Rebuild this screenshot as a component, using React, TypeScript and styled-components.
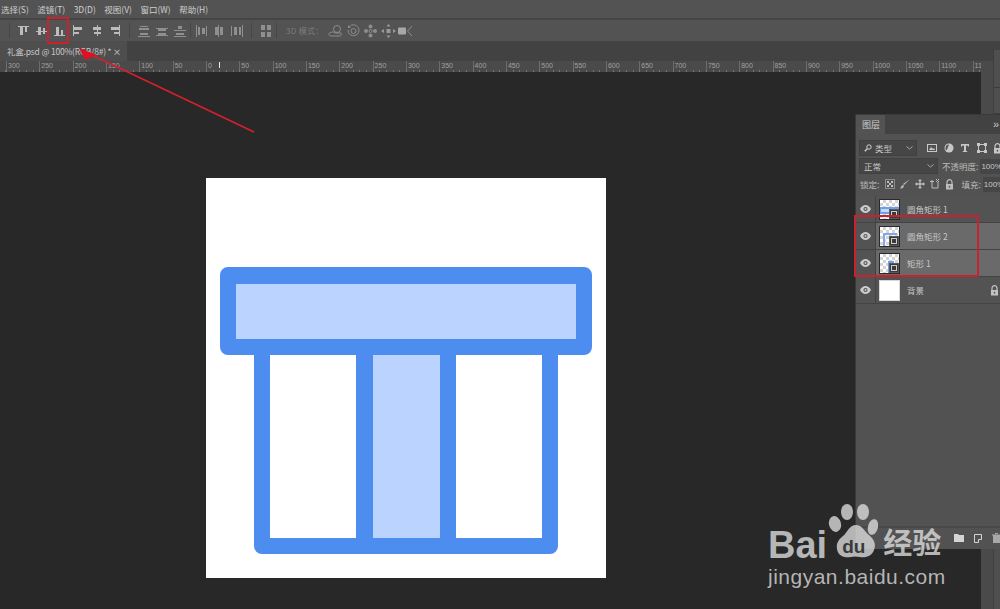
import React from "react";
import styled, { createGlobalStyle } from "styled-components";

const cjk = `"Noto Sans CJK SC", "Liberation Sans", sans-serif`;

const GlobalStyle = createGlobalStyle`
  html, body { margin: 0; padding: 0; background: #282828; }
  body { font-family: ${cjk}; }
  * { box-sizing: border-box; }
`;

const Page = styled.div`
  position: relative;
  width: 1000px;
  height: 609px;
  overflow: hidden;
  display: flex;
  flex-direction: column;
  background: #282828;
`;

const MenuBar = styled.div`
  height: 18px;
  background: #535353;
  display: flex;
  align-items: center;
  padding-left: 1px;
  gap: 8.5px;
`;

const MenuItem = styled.span`
  font-size: 8.5px;
  line-height: 18px;
  color: #cfcfcf;
  white-space: nowrap;
`;

const Toolbar = styled.div`
  height: 23px;
  background: #535353;
  border-top: 2px solid #454545;
  display: flex;
  align-items: center;
  padding-left: 9px;
`;

const ToolSeparator = styled.div<{ $left: number; $right: number }>`
  width: 1px;
  height: 15px;
  background: #464646;
  margin: 0 ${(p) => p.$right}px 0 ${(p) => p.$left}px;
`;

const ToolGroup = styled.div<{ $gap: number }>`
  display: flex;
  align-items: center;
  gap: ${(p) => p.$gap}px;
`;

const ModeLabel = styled.span`
  font-size: 8px;
  color: #7d7d7d;
  width: 42px;
  white-space: nowrap;
  letter-spacing: 0.3px;
`;

const Main = styled.div`
  flex: 1;
  display: flex;
  min-height: 0;
`;

const DocumentArea = styled.div`
  flex: 1;
  display: flex;
  flex-direction: column;
  min-width: 0;
`;

const TabBar = styled.div`
  height: 20px;
  background: #424242;
  display: flex;
`;

const DocTab = styled.div`
  width: 127px;
  background: #4e4e4e;
  display: flex;
  align-items: center;
  justify-content: space-between;
  padding: 0 6px 0 7px;
  font-size: 8.5px;
  letter-spacing: -0.2px;
  color: #c8c8c8;
  white-space: nowrap;
`;

const Ruler = styled.div`
  position: relative;
  height: 11px;
  background: #4a4a4a;
  display: flex;
  overflow: hidden;
  padding-left: 6px;
`;

const RulerTicks = styled.div`
  position: absolute;
  left: 0;
  right: 0;
  bottom: 0;
  height: 2px;
  background: repeating-linear-gradient(
    90deg,
    #747474 0,
    #747474 1px,
    transparent 1px,
    transparent 6.667px
  );
  background-position: 6px 0;
`;

const RulerCell = styled.div`
  flex: 0 0 33.333px;
  border-left: 1px solid #6c6c6c;
  padding-left: 1px;
  font-family: "Liberation Sans", sans-serif;
  font-size: 7px;
  line-height: 10px;
  color: #a0a0a0;
`;

const RulerMark = styled.div`
  position: absolute;
  left: 219px;
  top: 1px;
  width: 1px;
  height: 6px;
  background: #e8e8e8;
`;

const Canvas = styled.div`
  flex: 1;
  background: #282828;
  padding: 106px 0 0 206px;
  overflow: hidden;
`;

const Artboard = styled.div`
  width: 400px;
  height: 400px;
  background: #fff;
  padding: 89px 0 0 14px;
`;

const Lid = styled.div`
  width: 372px;
  height: 88px;
  border: 16px solid #4e8df0;
  border-top-width: 17px;
  border-radius: 8px;
  background: #bbd3ff;
  background-clip: padding-box;
`;

const Box = styled.div`
  width: 304px;
  height: 199px;
  margin-left: 34px;
  background: #4e8df0;
  border-radius: 0 0 8px 8px;
  padding: 0 16px 16px;
  display: flex;
  justify-content: space-between;
`;

const Slot = styled.div<{ $width: number; $fill: string }>`
  width: ${(p) => p.$width}px;
  height: 100%;
  background: ${(p) => p.$fill};
`;

const Dock = styled.div`
  width: 19px;
  display: flex;
  flex-direction: column;
  background: linear-gradient(#424242 20px, #4a4a4a 20px);
  padding-top: 9px;
`;

const DockRail = styled.div`
  flex: 1;
  margin-left: 12px;
  border-left: 1px solid #3e3e3e;
  background: #4f4f4f;
  display: flex;
  flex-direction: column;
  gap: 2px;
`;

const DockCell = styled.div<{ $height: number }>`
  height: ${(p) => p.$height}px;
  border-bottom: 1px solid #3e3e3e;
`;

/* layers panel floats over the canvas */
const LayersPanel = styled.div`
  position: absolute;
  left: 855px;
  top: 114px;
  width: 145px;
  height: 435px;
  background: #525252;
  border-left: 1px solid #3a3a3a;
  border-top: 1px solid #3a3a3a;
  display: flex;
  flex-direction: column;
  overflow: hidden;
`;

const PanelHeader = styled.div`
  height: 19px;
  flex: none;
  background: #424242;
  display: flex;
  justify-content: space-between;
  align-items: center;
  padding-right: 1px;
`;

const PanelTab = styled.div`
  width: 29px;
  height: 100%;
  background: #535353;
  font-size: 9px;
  line-height: 19px;
  color: #cdcdcd;
  padding-left: 6px;
`;

const Collapse = styled.span`
  font-family: "Liberation Sans", sans-serif;
  font-size: 11px;
  color: #c8c8c8;
  line-height: 19px;
`;

const OptionRow = styled.div`
  height: 18px;
  flex: none;
  display: flex;
  align-items: center;
  padding-left: 3px;
  font-size: 8.5px;
  color: #bdbdbd;
  white-space: nowrap;
`;

const FilterRow = styled(OptionRow)`
  margin-top: 5px;
`;

const Select = styled.div<{ $width: number }>`
  flex: none;
  width: ${(p) => p.$width}px;
  height: 16px;
  background: #464646;
  border: 1px solid #414141;
  display: flex;
  align-items: center;
  justify-content: space-between;
  padding: 0 3px 0 4px;
  color: #c8c8c8;
`;

const SelectLabel = styled.span`
  display: flex;
  align-items: center;
  gap: 3px;
`;

const OptionIcons = styled.div<{ $gap: number; $left: number }>`
  display: flex;
  align-items: center;
  gap: ${(p) => p.$gap}px;
  margin-left: ${(p) => p.$left}px;
  flex: none;
`;

const OptionLabel = styled.span<{ $left: number }>`
  margin-left: ${(p) => p.$left}px;
  flex: none;
`;

const ValueBox = styled.div`
  flex: none;
  width: 28px;
  height: 15px;
  margin-left: 2px;
  background: #464646;
  padding-left: 1px;
  font-family: "Liberation Sans", sans-serif;
  font-size: 8px;
  line-height: 15px;
  color: #c8c8c8;
`;

const LayerList = styled.div`
  margin-top: 3px;
  flex: 1;
  display: flex;
  flex-direction: column;
`;

const LayerRow = styled.div<{ $selected?: boolean }>`
  height: 27px;
  flex: none;
  display: flex;
  align-items: center;
  background: ${(p) => (p.$selected ? "#6a6a6a" : "#535353")};
  border-bottom: 1px solid #434343;
`;

const EyeCell = styled.div`
  width: 20px;
  height: 100%;
  flex: none;
  display: flex;
  align-items: center;
  justify-content: center;
  background: #535353;
  border-right: 1px solid #434343;
`;

const Thumb = styled.div<{ $plain?: boolean }>`
  position: relative;
  width: 21px;
  height: 21px;
  margin-left: 3px;
  flex: none;
  border: 1px solid ${(p) => (p.$plain ? "#d8d8d8" : "#2a2a2a")};
  overflow: hidden;
  background: ${(p) =>
    p.$plain
      ? "#fff"
      : "repeating-conic-gradient(#d4d4d4 0 25%, #fff 0 50%) 0 0 / 6px 6px"};
`;

const ThumbBadge = styled.div`
  position: absolute;
  right: 0;
  bottom: 0;
  width: 10px;
  height: 10px;
  background: #3a3a3a;
  border: 1px solid #5a5a5a;
  &::after {
    content: "";
    position: absolute;
    inset: 1px;
    border: 1px solid #cfcfcf;
  }
`;

const LayerName = styled.span`
  margin-left: 7px;
  font-size: 8.5px;
  color: #c6c6c6;
  white-space: nowrap;
  flex: 1;
`;

const LayerLock = styled.div`
  margin-right: 1px;
  display: flex;
`;

const PanelFooter = styled.div`
  height: 23px;
  flex: none;
  border-top: 2px solid #484848;
  display: flex;
  align-items: flex-start;
  justify-content: flex-end;
  gap: 9px;
  padding-top: 5px;
  margin-right: -1px;
`;

/* annotations drawn over the screenshot */
const Highlight = styled.div<{ $x: number; $y: number; $w: number; $h: number }>`
  position: absolute;
  left: ${(p) => p.$x}px;
  top: ${(p) => p.$y}px;
  width: ${(p) => p.$w}px;
  height: ${(p) => p.$h}px;
  border: 2px solid #c9222d;
`;

const ArrowLayer = styled.svg`
  position: absolute;
  left: 0;
  top: 0;
  pointer-events: none;
`;

const Watermark = styled.div`
  position: absolute;
  left: 766px;
  top: 503px;
  width: 190px;
  height: 90px;
  color: rgba(222, 222, 222, 0.78);
`;

const WatermarkRow = styled.div`
  display: flex;
  align-items: flex-end;
  height: 58px;
  padding-left: 2px;
`;

const BaiText = styled.span`
  font-family: "Liberation Sans", sans-serif;
  font-weight: 700;
  font-size: 38px;
  line-height: 32px;
`;

const PawWrap = styled.div`
  position: relative;
  width: 52px;
  height: 58px;
  margin-left: -1px;
  flex: none;
`;

const DuText = styled.span`
  position: absolute;
  left: 16px;
  top: 34px;
  font-family: "Liberation Sans", sans-serif;
  font-weight: 700;
  font-size: 19px;
  line-height: 19px;
  color: #3a3a3a;
`;

const JingyanText = styled.span`
  margin-left: 5px;
  font-size: 29px;
  font-weight: 700;
  line-height: 40px;
  white-space: nowrap;
`;

const SiteText = styled.div`
  font-family: "Liberation Sans", sans-serif;
  font-size: 21px;
  line-height: 26px;
  margin: 3px 0 0 2px;
  letter-spacing: 0.5px;
  white-space: nowrap;
`;

type Bar = [number, number, number, number];

function GlyphIcon({ bars, color = "#bcbcbc" }: { bars: Bar[]; color?: string }) {
  return (
    <svg width="14" height="14" viewBox="0 0 14 14">
      {bars.map((b, i) => (
        <rect key={i} x={b[0]} y={b[1]} width={b[2]} height={b[3]} fill={color} />
      ))}
    </svg>
  );
}

const groupA: Bar[][] = [
  [[1, 2, 11, 1], [3, 3, 3, 8], [8, 3, 2, 5]],
  [[1, 7, 11, 1], [3, 3, 3, 8], [8, 4, 2, 6]],
  [[1, 11, 11, 1], [3, 3, 3, 8], [8, 6, 2, 5]],
];
const groupB: Bar[][] = [
  [[2, 1, 1, 11], [3, 3, 8, 3], [3, 8, 5, 2]],
  [[7, 1, 1, 11], [3, 3, 8, 3], [4, 8, 7, 2]],
  [[11, 1, 1, 11], [3, 3, 8, 3], [6, 8, 5, 2]],
];
const groupC: Bar[][] = [
  [[3, 2, 8, 1], [2, 4, 10, 2], [3, 9, 8, 2], [1, 12, 12, 1]],
  [[1, 4, 12, 1], [3, 5, 8, 2], [3, 9, 8, 2], [1, 11, 12, 1]],
  [[5, 2, 4, 3], [1, 6, 12, 1], [3, 9, 8, 2], [1, 12, 12, 1]],
];
const groupD: Bar[][] = [
  [[2, 1, 1, 12], [4, 3, 2, 8], [8, 4, 3, 6], [12, 2, 1, 10]],
  [[6, 1, 1, 12], [3, 3, 3, 8], [8, 3, 3, 8]],
  [[1, 2, 1, 10], [4, 3, 3, 8], [9, 3, 2, 8], [12, 1, 1, 12]],
];
const autoAlign: Bar[] = [[2, 1, 4, 5], [8, 1, 4, 5], [2, 8, 4, 5], [8, 8, 4, 5]];

function ThreeDIcon({ kind }: { kind: number }) {
  const stroke = { fill: "none", stroke: "#8d8d8d", strokeWidth: 1 };
  return (
    <svg width="15" height="14" viewBox="0 0 15 14">
      {kind === 0 && (
        <>
          <circle cx="9" cy="5" r="3.5" {...stroke} />
          <path d="M1 9.5c2-2 5-2 6-.5h6c1 2 0 3-2 3H3C1.500 12 .5 11 1 9.500z" {...stroke} />
        </>
      )}
      {kind === 1 && (
        <>
          <path d="M3.500 2.500A5.500 5.500 0 1 1 2 6" {...stroke} />
          <circle cx="7.500" cy="7" r="2.500" {...stroke} />
          <path d="M2 1v3h3z" fill="#8d8d8d" />
        </>
      )}
      {kind === 2 && (
        <>
          <circle cx="7.500" cy="2.500" r="2" fill="#8d8d8d" />
          <circle cx="7.500" cy="11.500" r="2" fill="#8d8d8d" />
          <circle cx="3" cy="7" r="2" fill="#8d8d8d" />
          <circle cx="12" cy="7" r="2" fill="#8d8d8d" />
          <circle cx="7.500" cy="7" r="1.500" {...stroke} />
        </>
      )}
      {kind === 3 && (
        <>
          <rect x="5.500" y="5" width="4" height="4" fill="#9a9a9a" />
          <path d="M7.500 0l2 2.500h-4zM7.500 14l2-2.500h-4zM0 7l3-2v4zM15 7l-3-2v4z" fill="#9a9a9a" />
        </>
      )}
      {kind === 4 && (
        <>
          <rect x="0" y="3.500" width="8" height="7" rx="1" fill="#a8a8a8" />
          <path d="M14 2L9.500 7l4.500 5" {...stroke} />
        </>
      )}
    </svg>
  );
}

function EyeIcon() {
  return (
    <svg width="11" height="8" viewBox="0 0 11 8">
      <path d="M0 4c2.800-5.200 8.200-5.200 11 0-2.800 5.200-8.200 5.200-11 0z" fill="#cdcdcd" />
      <circle cx="5.500" cy="4" r="2.100" fill="#535353" />
      <circle cx="5.500" cy="4" r="1" fill="#cdcdcd" />
    </svg>
  );
}

function LockIcon({ color = "#c4c4c4" }: { color?: string }) {
  return (
    <svg width="9" height="11" viewBox="0 0 9 11">
      <path d="M2 5V3.200a2.500 2.500 0 0 1 5 0V5" fill="none" stroke={color} strokeWidth="1.200" />
      <rect x="1" y="5" width="7" height="5.500" fill={color} />
      <rect x="3.800" y="6.800" width="1.400" height="1.800" fill="#535353" />
    </svg>
  );
}

function SearchIcon() {
  return (
    <svg width="8" height="8" viewBox="0 0 8 8">
      <circle cx="5" cy="3" r="2.200" fill="none" stroke="#d0d0d0" />
      <path d="M3.300 4.700L.8 7.300" stroke="#d0d0d0" strokeWidth="1.300" />
    </svg>
  );
}

function Chevron() {
  return (
    <svg width="7" height="4" viewBox="0 0 7 4">
      <path d="M.5.500l3 2.500 3-2.500" fill="none" stroke="#a8a8a8" />
    </svg>
  );
}

function FilterIcons() {
  const c = "#c8c8c8";
  return (
    <OptionIcons $gap={6.5} $left={10}>
      <svg width="10" height="10" viewBox="0 0 10 10">
        <rect x=".5" y="1.500" width="9" height="7" fill="none" stroke={c} />
        <path d="M2 7l2-3 2 2 1-1 1 2z" fill={c} />
      </svg>
      <svg width="10" height="10" viewBox="0 0 10 10">
        <circle cx="5" cy="5" r="4.500" fill={c} />
        <path d="M5 1.500a3.500 3.500 0 0 0-2.500 6z" fill="#535353" />
      </svg>
      <svg width="10" height="10" viewBox="0 0 10 10">
        <path d="M1 1h8v2.500H8L7.500 2.500H6V8h1.200v1H2.800V8H4V2.500H2.500L2 3.500H1z" fill={c} />
      </svg>
      <svg width="10" height="10" viewBox="0 0 10 10">
        <rect x="1.500" y="1.500" width="7" height="7" fill="none" stroke={c} />
        <path d="M0 0h3v3H0zM7 0h3v3H7zM0 7h3v3H0zM7 7h3v3H7z" fill={c} />
      </svg>
      <LockIcon color={c} />
    </OptionIcons>
  );
}

function LockIcons() {
  const c = "#bdbdbd";
  return (
    <OptionIcons $gap={5} $left={6}>
      <svg width="10" height="10" viewBox="0 0 10 10">
        <rect x=".5" y=".5" width="9" height="9" fill="none" stroke="#8c8c8c" />
        <path d="M2 2h2v2H2zM6 2h2v2H6zM4 4h2v2H4zM2 6h2v2H2zM6 6h2v2H6z" fill={c} />
      </svg>
      <svg width="10" height="10" viewBox="0 0 10 10">
        <path d="M9.500.5L4 6 3 5zM3 6l1 1c-.5 2-2 2.500-4 2.500C1 8.500 1 7 3 6z" fill={c} />
      </svg>
      <svg width="10" height="10" viewBox="0 0 10 10">
        <path d="M5 0l2 2H5.700v2.300H8V3l2 2-2 2V5.700H5.700V8H7L5 10 3 8h1.300V5.700H2V7L0 5l2-2v1.300h2.300V2H3z" fill={c} />
      </svg>
      <svg width="10" height="10" viewBox="0 0 10 10">
        <path d="M2 1v8h6V3" fill="none" stroke={c} />
        <path d="M0 2.500h4M6 0l3 3M6 3l3-3" stroke={c} fill="none" />
      </svg>
      <LockIcon color={c} />
    </OptionIcons>
  );
}

function ThumbArt({ kind }: { kind: number }) {
  if (kind === 0) {
    return (
      <svg width="19" height="19" viewBox="0 0 19 19">
        <rect x="0" y="7" width="19" height="7" fill="#6c9ff2" />
        <rect x="1" y="9" width="17" height="3" fill="#c5d9ff" />
      </svg>
    );
  }
  if (kind === 1) {
    return (
      <svg width="19" height="19" viewBox="0 0 19 19">
        <path d="M3 19V6h14v2H5v11z" fill="#7ea9f2" />
      </svg>
    );
  }
  return (
    <svg width="19" height="19" viewBox="0 0 19 19">
      <path d="M8 19V7h6v12h-2V9h-2v10z" fill="#6c9ff2" />
    </svg>
  );
}

const layers = [
  { name: "圆角矩形 1", art: 0 },
  { name: "圆角矩形 2", art: 1, selected: true },
  { name: "矩形 1", art: 2, selected: true },
];

const rulerLabels = Array.from({ length: 30 }, (_, i) => Math.abs(300 - i * 50));

export default function App() {
  return (
    <Page>
      <GlobalStyle />
      <MenuBar>
        {["选择(S)", "滤镜(T)", "3D(D)", "视图(V)", "窗口(W)", "帮助(H)"].map((m) => (
          <MenuItem key={m}>{m}</MenuItem>
        ))}
      </MenuBar>

      <Toolbar>
        <ToolSeparator $left={0} $right={7} />
        <ToolGroup $gap={4}>
          {groupA.map((b, i) => (
            <GlyphIcon key={i} bars={b} />
          ))}
        </ToolGroup>
        <ToolSeparator $left={1} $right={2} />
        <ToolGroup $gap={4.500}>
          {groupB.map((b, i) => (
            <GlyphIcon key={i} bars={b} />
          ))}
        </ToolGroup>
        <ToolSeparator $left={7} $right={7} />
        <ToolGroup $gap={4}>
          {groupC.map((b, i) => (
            <GlyphIcon key={i} bars={b} color="#8f8f8f" />
          ))}
        </ToolGroup>
        <ToolSeparator $left={3} $right={3} />
        <ToolGroup $gap={4}>
          {groupD.map((b, i) => (
            <GlyphIcon key={i} bars={b} color="#8f8f8f" />
          ))}
        </ToolGroup>
        <ToolSeparator $left={7} $right={7} />
        <GlyphIcon bars={autoAlign} color="#8f8f8f" />
        <ToolSeparator $left={3} $right={9} />
        <ModeLabel>3D 模式：</ModeLabel>
        <ToolGroup $gap={2.500}>
          {[0, 1, 2, 3, 4].map((k) => (
            <ThreeDIcon key={k} kind={k} />
          ))}
        </ToolGroup>
      </Toolbar>

      <Main>
        <DocumentArea>
          <TabBar>
            <DocTab>
              <span>礼盒.psd @ 100%(RGB/8#) *</span>
              <span>×</span>
            </DocTab>
          </TabBar>
          <Ruler>
            {rulerLabels.map((v, i) => (
              <RulerCell key={i}>{v}</RulerCell>
            ))}
            <RulerTicks />
            <RulerMark />
          </Ruler>
          <Canvas>
            <Artboard>
              <Lid />
              <Box>
                <Slot $width={86} $fill="#fff" />
                <Slot $width={67} $fill="#bbd3ff" />
                <Slot $width={86} $fill="#fff" />
              </Box>
            </Artboard>
          </Canvas>
        </DocumentArea>
        <Dock>
          <DockRail>
            <DockCell $height={38} />
            <DockCell $height={24} />
            <DockCell $height={8} />
          </DockRail>
        </Dock>
      </Main>

      <LayersPanel>
        <PanelHeader>
          <PanelTab>图层</PanelTab>
          <Collapse>»</Collapse>
        </PanelHeader>
        <FilterRow>
          <Select $width={58}>
            <SelectLabel>
              <SearchIcon />
              类型
            </SelectLabel>
            <Chevron />
          </Select>
          <FilterIcons />
        </FilterRow>
        <OptionRow>
          <Select $width={79}>
            <span>正常</span>
            <Chevron />
          </Select>
          <OptionLabel $left={4}>不透明度:</OptionLabel>
          <ValueBox>100%</ValueBox>
        </OptionRow>
        <OptionRow>
          <OptionLabel $left={1}>锁定:</OptionLabel>
          <LockIcons />
          <OptionLabel $left={7}>填充:</OptionLabel>
          <ValueBox>100%</ValueBox>
        </OptionRow>
        <LayerList>
          {layers.map((l) => (
            <LayerRow key={l.name} $selected={l.selected}>
              <EyeCell>
                <EyeIcon />
              </EyeCell>
              <Thumb>
                <ThumbArt kind={l.art} />
                <ThumbBadge />
              </Thumb>
              <LayerName>{l.name}</LayerName>
            </LayerRow>
          ))}
          <LayerRow>
            <EyeCell>
              <EyeIcon />
            </EyeCell>
            <Thumb $plain />
            <LayerName>背景</LayerName>
            <LayerLock>
              <LockIcon />
            </LayerLock>
          </LayerRow>
        </LayerList>
        <PanelFooter>
          <svg width="10" height="9" viewBox="0 0 10 9">
            <path d="M0 1h4l1 1h5v7H0z" fill="#d4d4d4" />
          </svg>
          <svg width="10" height="10" viewBox="0 0 10 10">
            <path d="M1.500 1.500h7v5h-3v3h-4z" fill="none" stroke="#d4d4d4" />
          </svg>
          <svg width="9" height="10" viewBox="0 0 9 10">
            <path d="M0 1.500h9v1H8V10H1V2.500H0zM3 0h3v1H3z" fill="#a8a8a8" />
          </svg>
        </PanelFooter>
      </LayersPanel>

      <Highlight $x={47} $y={17} $w={22} $h={27} />
      <Highlight $x={854} $y={215} $w={125} $h={62} />
      <ArrowLayer width="1000" height="609" viewBox="0 0 1000 609">
        <path d="M254 132L92 55" stroke="#d3202c" strokeWidth="1.800" fill="none" />
        <path d="M79 48l18 7-12 5z" fill="#e01024" />
      </ArrowLayer>

      <Watermark>
        <WatermarkRow>
          <BaiText>Bai</BaiText>
          <PawWrap>
            <svg width="52" height="58" viewBox="0 0 52 58" fill="currentColor">
              <ellipse cx="9" cy="21" rx="6" ry="8" transform="rotate(-15 9 21)" />
              <ellipse cx="21" cy="9" rx="6" ry="8" />
              <ellipse cx="37" cy="9" rx="6" ry="8" />
              <ellipse cx="47" cy="24" rx="5" ry="8" transform="rotate(15 47 24)" />
              <path d="M30 22c6 0 8 6 13 10 6 5 7 10 5 15-2 6-8 8-14 7-3-.5-6-1-9 0-7 1-13-1-14-8-1-6 2-10 6-13 5-4 6-11 13-11z" />
            </svg>
            <DuText>du</DuText>
          </PawWrap>
          <JingyanText>经验</JingyanText>
        </WatermarkRow>
        <SiteText>jingyan.baidu.com</SiteText>
      </Watermark>
    </Page>
  );
}
